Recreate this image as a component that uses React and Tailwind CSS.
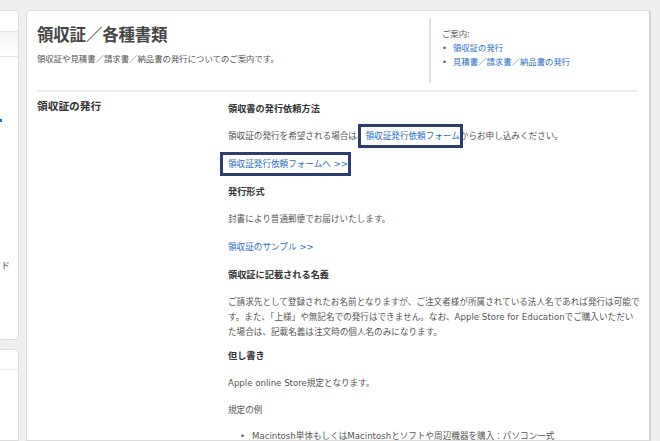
import React from "react";

const jp = { fontFamily: '"DejaVu Sans", "Noto Sans CJK JP", sans-serif' };

function Boxed({ children }) {
  return (
    <span className="relative">
      {children}
      <span className="absolute -left-[8px] -right-[3px] -top-[7px] -bottom-[7px] border-[3px] border-[#2d3e6e]" />
    </span>
  );
}

export default function App() {
  return (
    <div style={jp} className="w-[660px] h-[441px] overflow-hidden bg-[#efefef] flex pt-[10px]">
      {/* sidebar, mostly off screen */}
      <div className="w-[160px] -ml-[141px] shrink-0 flex flex-col">
        <div className="h-[330px] bg-white border border-[#dcdcdc] rounded-tr-[4px] rounded-br-[4px] flex flex-col">
          <div className="h-[21px] border-b border-[#e6e6e6]" />
          <div className="h-[25px] bg-gradient-to-b from-[#f4f4f4] to-white border-b border-[#e6e6e6]" />
          <div className="mt-[62px] ml-[140px] w-[2px] h-[3px] bg-[#2a6ec2]" />
          <div className="mt-[138px] text-right text-[9px] leading-[12px] text-[#555] pr-[8px]">ド</div>
        </div>
        <div className="mt-[9px] flex-1 bg-white border border-[#dcdcdc] rounded-tr-[4px]">
          <div className="h-[20px] border-b border-[#ececec]" />
        </div>
      </div>

      {/* main card */}
      <div className="ml-[7px] w-[625px] shrink-0 bg-white border border-[#dcdcdc] border-r-[#d0d0d0] border-r-2 rounded-t-[4px]">
        <div className="flex pl-[10px] pt-[7px] pr-[12px]">
          <div className="flex-1 pt-[7px]">
            <h1 className="text-[16.5px] leading-[22px] text-[#454545] font-semibold tracking-[-0.2px]">領収証／各種書類</h1>
            <p className="mt-[5px] text-[8.4px] leading-[14px] text-[#555]">領収証や見積書／請求書／納品書の発行についてのご案内です。</p>
          </div>
          <div className="w-[208px] border-l-2 border-[#e2e2e2] h-[65px] pl-[11px] pt-[9px] text-[8.4px] leading-[14px]">
            <div className="text-[#555]">ご案内:</div>
            <ul>
              <li className="flex">
                <span className="w-[11px] text-[#555]">•</span>
                <span className="text-[#2a6ec2]">領収証の発行</span>
              </li>
              <li className="flex">
                <span className="w-[11px] text-[#555]">•</span>
                <span className="text-[#2a6ec2]">見積書／請求書／納品書の発行</span>
              </li>
            </ul>
          </div>
        </div>

        <div className="ml-[10px] mr-[12px] mt-[7px] h-[2px] bg-[#ececec]" />

        <div className="flex pl-[10px] pt-[7px]">
          <div className="w-[191px] shrink-0 text-[10.7px] font-bold text-[#333] leading-[16px]">領収証の発行</div>
          <div className="flex-1 pr-[9px] text-[8.6px] leading-[15px] text-[#555]">
            <h2 className="text-[9.2px] font-bold text-[#333] leading-[16px] mt-[2px]">領収書の発行依頼方法</h2>
            <p className="mt-[12px]">
              領収証の発行を希望される場合は、<Boxed><span className="text-[#2a6ec2]">領収証発行依頼フォーム</span></Boxed>からお申し込みください。
            </p>
            <p className="mt-[13px]">
              <Boxed><span className="text-[#2a6ec2]">領収証発行依頼フォームへ &gt;&gt;</span></Boxed>
            </p>
            <h2 className="text-[9.2px] font-bold text-[#333] leading-[16px] mt-[12px]">発行形式</h2>
            <p className="mt-[12px]">封書により普通郵便でお届けいたします。</p>
            <p className="mt-[13px] text-[#2a6ec2]">領収証のサンプル &gt;&gt;</p>
            <h2 className="text-[9.2px] font-bold text-[#333] leading-[16px] mt-[12px]">領収証に記載される名義</h2>
            <p className="mt-[12px]">
              ご請求先として登録されたお名前となりますが、ご注文者様が所属されている法人名であれば発行は可能です。また、「上様」や無記名での発行はできません。なお、Apple Store for Educationでご購入いただいた場合は、記載名義は注文時の個人名のみになります。
            </p>
            <h2 className="text-[9.2px] font-bold text-[#333] leading-[16px] mt-[8px]">但し書き</h2>
            <p className="mt-[12px]">Apple online Store規定となります。</p>
            <p className="mt-[12px]">規定の例</p>
            <ul className="mt-[11px] pl-[12px]">
              <li className="flex">
                <span className="w-[12px]">•</span>
                <span>Macintosh単体もしくはMacintoshとソフトや周辺機器を購入：パソコン一式</span>
              </li>
            </ul>
          </div>
        </div>
      </div>
    </div>
  );
}
